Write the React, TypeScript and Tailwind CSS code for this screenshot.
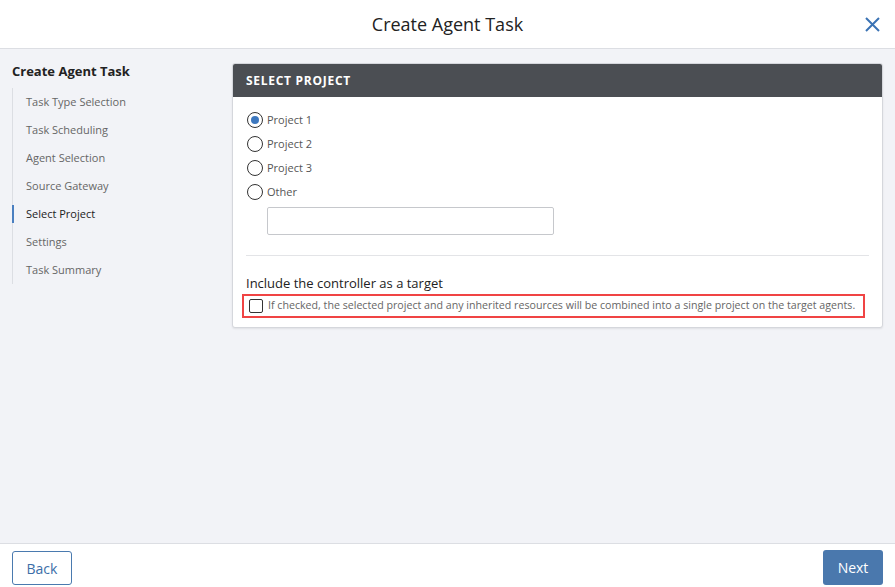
import React, { useState } from "react";

const steps = [
  "Task Type Selection",
  "Task Scheduling",
  "Agent Selection",
  "Source Gateway",
  "Select Project",
  "Settings",
  "Task Summary",
];

const projects = ["Project 1", "Project 2", "Project 3", "Other"];

export default function App() {
  const [selected, setSelected] = useState("Project 1");
  const [includeController, setIncludeController] = useState(false);

  return (
    <div
      className="flex h-[587px] w-[895px] flex-col bg-[#f2f3f7] text-[#222]"
      style={{ fontFamily: "'Open Sans', 'Noto Sans', sans-serif" }}
    >
      {/* Header */}
      <header className="relative flex h-[49px] shrink-0 items-center justify-center border-b border-[#dcdee3] bg-white">
        <h1 className="text-[18px] leading-none text-[#222]">Create Agent Task</h1>
        <button className="absolute right-[14px] top-[16px] text-[#3b73b4]">
          <svg width="17" height="17" viewBox="0 0 17 17" fill="none" stroke="currentColor" strokeWidth="2">
            <path d="M2 2 L15 15 M15 2 L2 15" />
          </svg>
        </button>
      </header>

      {/* Body */}
      <main className="flex flex-1 overflow-hidden">
        {/* Sidebar */}
        <aside className="w-[232px] shrink-0 pl-[12px] pt-[13px]">
          <h2 className="text-[13px] font-bold leading-[18px] text-[#222]">Create Agent Task</h2>
          <ul className="mt-[8px] border-l border-[#dcdee3]">
            {steps.map((step) => {
              const active = step === "Select Project";
              return (
                <li key={step} className="relative flex h-[28px] items-center pl-[13px]">
                  {active && (
                    <span className="absolute -left-[1px] top-[5px] h-[18px] w-[2px] bg-[#4a7fc0]" />
                  )}
                  <span className={`text-[11px] ${active ? "text-[#222]" : "text-[#666]"}`}>{step}</span>
                </li>
              );
            })}
          </ul>
        </aside>

        {/* Content */}
        <section className="flex-1 pr-[12px] pt-[14px]">
          <div className="overflow-hidden rounded-[3px] border border-[#d5d7dc] bg-white shadow-[0_1px_2px_rgba(0,0,0,0.08)]">
            <div className="flex h-[33px] items-center bg-[#4b4e53] px-[13px]">
              <span className="text-[12px] font-bold tracking-[0.06em] text-white">SELECT PROJECT</span>
            </div>
            <div className="px-[13px] pb-[9px] pt-[11px]">
              {projects.map((p) => {
                const checked = selected === p;
                return (
                  <label key={p} className="flex h-[24px] cursor-pointer items-center gap-[4px] pl-[1px]">
                    <span className="flex h-[16px] w-[16px] items-center justify-center rounded-full border-[1.5px] border-[#333]">
                      {checked && <span className="h-[8px] w-[8px] rounded-full bg-[#3d78bf]" />}
                    </span>
                    <input
                      type="radio"
                      className="hidden"
                      checked={checked}
                      onChange={() => setSelected(p)}
                    />
                    <span className="text-[11px] text-[#555]">{p}</span>
                  </label>
                );
              })}
              <input
                type="text"
                className="ml-[21px] mt-[3px] block h-[28px] w-[287px] rounded-[2px] border border-[#c6c8cc] px-2 text-[12px] outline-none"
              />
              <div className="mt-[20px] h-px bg-[#e3e4e7]" />
              <div className="mt-[19px] text-[13px] leading-[16px] text-[#222]">Include the controller as a target</div>
              <label className="-ml-[4px] mt-[3px] flex h-[24px] w-[623px] cursor-pointer items-center gap-[5px] border-2 border-[#f04444] pl-[5px]">
                <input
                  type="checkbox"
                  className="hidden"
                  checked={includeController}
                  onChange={(e) => setIncludeController(e.target.checked)}
                />
                <span className="h-[14px] w-[14px] shrink-0 rounded-[2px] border border-[#333] bg-white" />
                <span className="whitespace-nowrap text-[10.65px] text-[#666]">
                  If checked, the selected project and any inherited resources will be combined into a single project on the target agents.
                </span>
              </label>
            </div>
          </div>
        </section>
      </main>

      {/* Footer */}
      <footer className="flex h-[44px] shrink-0 items-start justify-between border-t border-[#dcdee3] bg-white px-[12px] pt-[6px]">
        <button className="mt-[1px] h-[34px] w-[60px] rounded-[3px] border border-[#4a7aaf] bg-white text-[14px] text-[#3c6ea8]">
          Back
        </button>
        <button className="h-[35px] w-[60px] rounded-[3px] bg-[#4a78ad] text-[14px] text-white">Next</button>
      </footer>
    </div>
  );
}
